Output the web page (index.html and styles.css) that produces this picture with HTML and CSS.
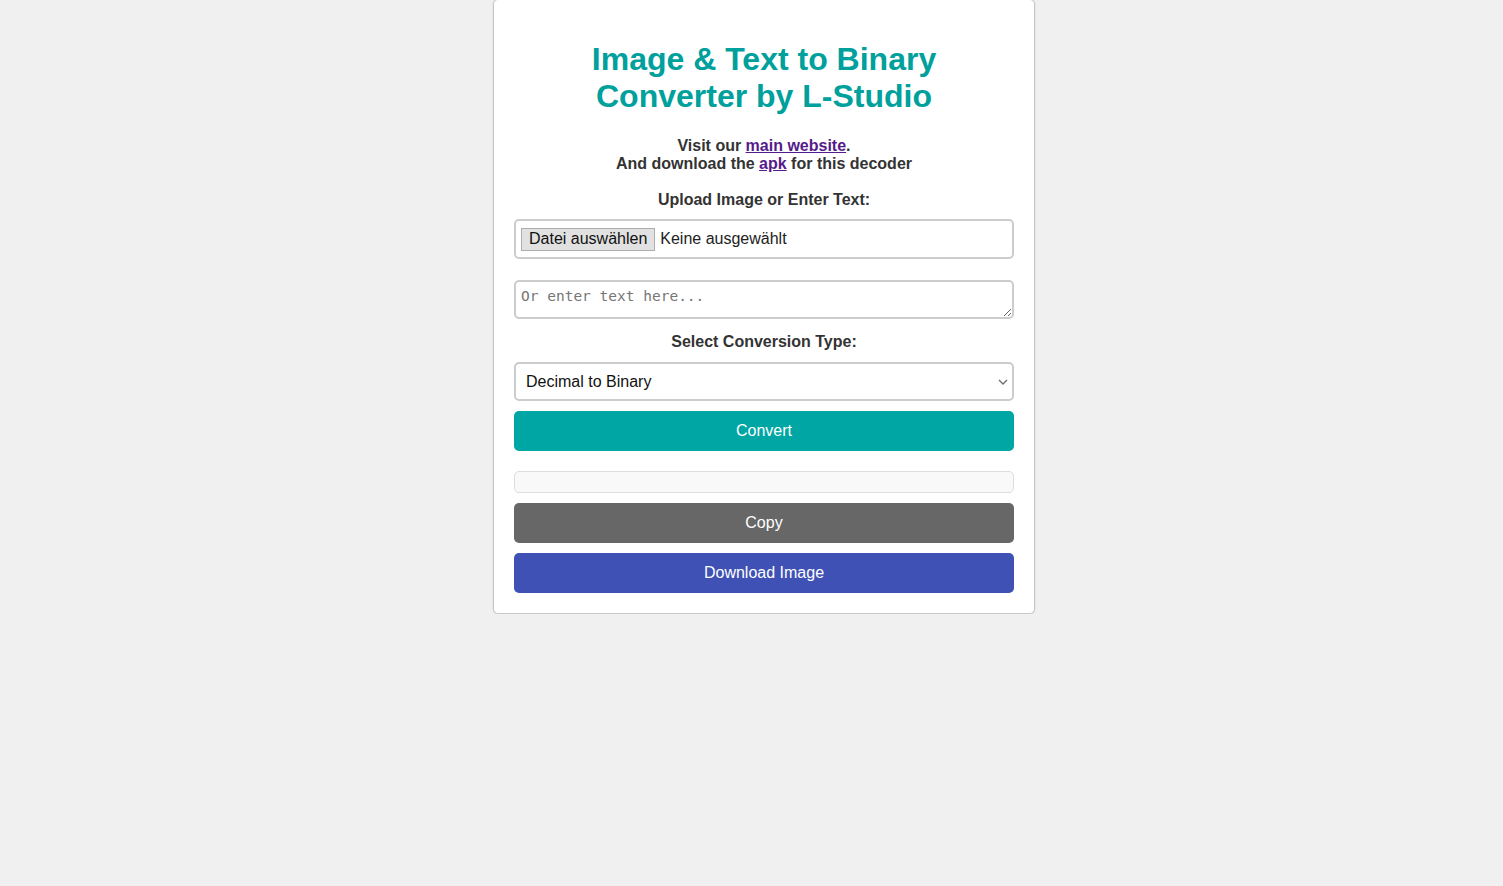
FILE: index.html
```html
<!DOCTYPE html>
<html lang="de">
<head>
<meta charset="utf-8">
<title>Image &amp; Text to Binary Converter by L-Studio</title>
<link rel="stylesheet" href="styles.css">
</head>
<body>
<main class="card">
  <h1 class="title">Image &amp; Text to Binary Converter by L-Studio</h1>
  <p class="intro">Visit our <a class="link" href="#">main website</a>.<br>And download the <a class="link" href="#">apk</a> for this decoder</p>
  <label class="field-label upload-label" for="file">Upload Image or Enter Text:</label>
  <div class="file-box">
    <span class="file-button">Datei auswählen</span>
    <span class="file-name">Keine ausgewählt</span>
  </div>
  <textarea class="text-input" placeholder="Or enter text here..."></textarea>
  <label class="field-label select-label" for="type">Select Conversion Type:</label>
  <div class="select-wrap">
    <select class="type-select" id="type">
      <option>Decimal to Binary</option>
      <option>Binary to Decimal</option>
      <option>Text to Binary</option>
      <option>Image to Binary</option>
    </select>
    <svg class="select-arrow" width="10" height="6" viewBox="0 0 10 6" aria-hidden="true">
      <path d="M1 1 L5 5 L9 1" fill="none" stroke="#6b6b6b" stroke-width="1.3"/>
    </svg>
  </div>
  <button class="btn btn-convert" type="button">Convert</button>
  <div class="output"></div>
  <button class="btn btn-copy" type="button">Copy</button>
  <button class="btn btn-download" type="button">Download Image</button>
</main>
</body>
</html>
```

FILE: styles.css
```css
html, body {
  margin: 0;
  padding: 0;
}
body {
  background: #f0f0f0;
  font-family: "Liberation Sans", Arial, sans-serif;
  color: #333;
  padding-left: 25px;
}
.card {
  box-sizing: content-box;
  width: 500px;
  margin: -1px auto 0;
  padding: 20px;
  background: #fff;
  border: 1px solid #c8c8c8;
  border-radius: 5px;
  box-shadow: 0 0 2px rgba(0, 0, 0, 0.15);
  text-align: center;
}
.title {
  font-size: 32px;
  font-weight: bold;
  line-height: 37px;
  color: #00a09c;
  margin: 21px 0 22px;
}
.intro {
  font-size: 16px;
  font-weight: bold;
  line-height: 18px;
  margin: 0 0 16px;
}
.link {
  color: #551a8b;
  text-decoration: underline;
}
.field-label {
  display: block;
  font-size: 16px;
  font-weight: bold;
  line-height: 18px;
}
.upload-label {
  margin: 18px 0 10px;
}
.file-box {
  box-sizing: border-box;
  height: 40px;
  display: flex;
  align-items: center;
  gap: 5px;
  padding: 0 5px;
  border: 2px solid #ccc;
  border-radius: 5px;
  margin-bottom: 21px;
  text-align: left;
  font-size: 16px;
  color: #222;
}
.file-button {
  box-sizing: border-box;
  height: 23px;
  line-height: 20px;
  padding: 0 7px;
  background: #e1e1e1;
  border: 1px solid #adadad;
  color: #111;
}
.file-name {
  color: #222;
}
.text-input {
  display: block;
  box-sizing: border-box;
  width: 100%;
  height: 39px;
  margin: 0 0 14px;
  padding: 6px 5px;
  border: 2px solid #ccc;
  border-radius: 5px;
  font-family: "DejaVu Sans Mono", "Liberation Mono", monospace;
  font-size: 14.5px;
  resize: vertical;
}
.text-input::placeholder {
  color: #767676;
}
.select-label {
  margin: 0 0 11px;
}
.select-wrap {
  position: relative;
  margin: 0 0 10px;
}
.type-select {
  display: block;
  box-sizing: border-box;
  width: 100%;
  height: 39px;
  margin: 0;
  padding: 0 10px;
  border: 2px solid #ccc;
  border-radius: 5px;
  background: #fff;
  font-family: "Liberation Sans", Arial, sans-serif;
  font-size: 16px;
  color: #111;
  -webkit-appearance: none;
  appearance: none;
}
.select-arrow {
  position: absolute;
  right: 6px;
  top: 17px;
  pointer-events: none;
}
.btn {
  display: block;
  width: 100%;
  height: 40px;
  border: 0;
  border-radius: 5px;
  color: #fff;
  font-family: "Liberation Sans", Arial, sans-serif;
  font-size: 16px;
  padding: 0;
}
.btn-convert {
  background: #00a6a3;
  margin-bottom: 20px;
}
.output {
  box-sizing: border-box;
  height: 22px;
  background: #f9f9f9;
  border: 1px solid #ddd;
  border-radius: 5px;
  margin-bottom: 10px;
}
.btn-copy {
  background: #676767;
  margin-bottom: 10px;
}
.btn-download {
  background: #3f51b5;
}
```
